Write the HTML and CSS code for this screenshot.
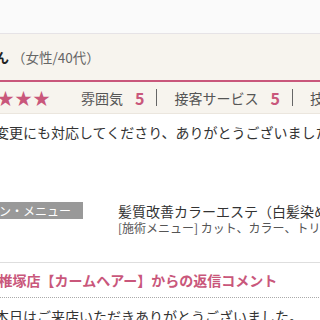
FILE: index.html
```html
<!DOCTYPE html>
<html lang="ja">
<head>
    <meta charset="UTF-8">
    <meta name="viewport" content="width=device-width, initial-scale=1.0">
    <title>口コミ</title>
    <link rel="stylesheet" href="styles.css">
</head>
<body>
    <div class="topbar"></div>

    <div class="page">
        <div class="review-head">
            <div class="reviewer">
                <span class="name">ゆきこさん</span><span class="meta">（女性/40代）</span>
            </div>
            <div class="ratings">
                <span class="stars">★★★★★</span>
                <span class="rate"><span class="rate-label">雰囲気</span><span class="rate-num">5</span></span>
                <span class="rate"><span class="rate-label">接客サービス</span><span class="rate-num">5</span></span>
                <span class="rate"><span class="rate-label">技術・仕上がり</span><span class="rate-num">5</span></span>
            </div>
        </div>

        <p class="comment">予約日の変更にも対応してくださり、ありがとうございました。</p>

        <div class="menu-row">
            <span class="menu-label">クーポン・メニュー</span>
            <div class="menu-info">
                <p class="menu-title">髪質改善カラーエステ（白髪染め）</p>
                <p class="menu-sub">[施術メニュー] カット、カラー、トリートメント</p>
            </div>
        </div>

        <div class="reply">
            <h3 class="reply-title">カーム　椎塚店【カームヘアー】からの返信コメント</h3>
            <p class="reply-text">本日はご来店いただきありがとうございました。</p>
        </div>
    </div>
</body>
</html>
```

FILE: styles.css
```css
body {
    margin: 0;
    padding: 0;
    overflow: hidden;
    background-color: #fff;
    color: #333;
    font-family: "Noto Sans CJK JP", "Noto Sans", sans-serif;
    font-size: 14px;
}
p, h3 {
    margin: 0;
}
.topbar {
    height: 33px;
    background-color: #fafafa;
    border-bottom: 1px solid #e6e3e6;
}
.page {
    margin-left: -61px;
    width: 720px;
}
.review-head {
    background-color: #f7f4ee;
    border-bottom: 1px solid #ebe6de;
}
.reviewer {
    height: 46px;
    line-height: 46px;
    border-bottom: 2px solid #c9577b;
    white-space: nowrap;
}
.name {
    font-weight: bold;
    color: #222;
}
.meta {
    font-size: 13.5px;
    color: #666;
    margin-left: 3px;
}
.ratings {
    height: 31px;
    display: flex;
    align-items: center;
    white-space: nowrap;
}
.stars {
    margin-left: 22px;
    font-size: 17px;
    letter-spacing: 1px;
    color: #c9577b;
    line-height: 1;
}
.rate {
    display: flex;
    align-items: center;
    height: 17px;
    padding: 0 12px 0 17px;
    border-left: 1px solid #666;
}
.stars + .rate {
    border-left: none;
    padding-left: 30px;
}
.rate-label {
    color: #555;
    margin-right: 12px;
}
.rate-num {
    color: #c9577b;
    font-weight: bold;
    font-size: 16px;
}
.comment {
    margin-top: 7px;
    line-height: 22px;
    white-space: nowrap;
}
.menu-row {
    display: flex;
    align-items: flex-start;
    margin-top: 59px;
    padding-bottom: 26px;
    border-bottom: 1px solid #dedede;
}
.menu-label {
    width: 144px;
    box-sizing: border-box;
    padding-right: 12px;
    text-align: right;
    background-color: #999;
    color: #fff;
    font-size: 12px;
    line-height: 17px;
    white-space: nowrap;
}
.menu-info {
    margin-left: 35px;
    white-space: nowrap;
}
.menu-title {
    line-height: 18px;
}
.menu-sub {
    font-size: 12px;
    line-height: 16px;
    color: #555;
}
.reply-title {
    font-size: 14px;
    color: #c9577b;
    line-height: 20px;
    padding: 7px 0 7px 4px;
    border-bottom: 1px dotted #aaa;
    white-space: nowrap;
}
.reply-text {
    margin-top: 7px;
    padding-left: 56px;
    line-height: 22px;
    white-space: nowrap;
}
```
